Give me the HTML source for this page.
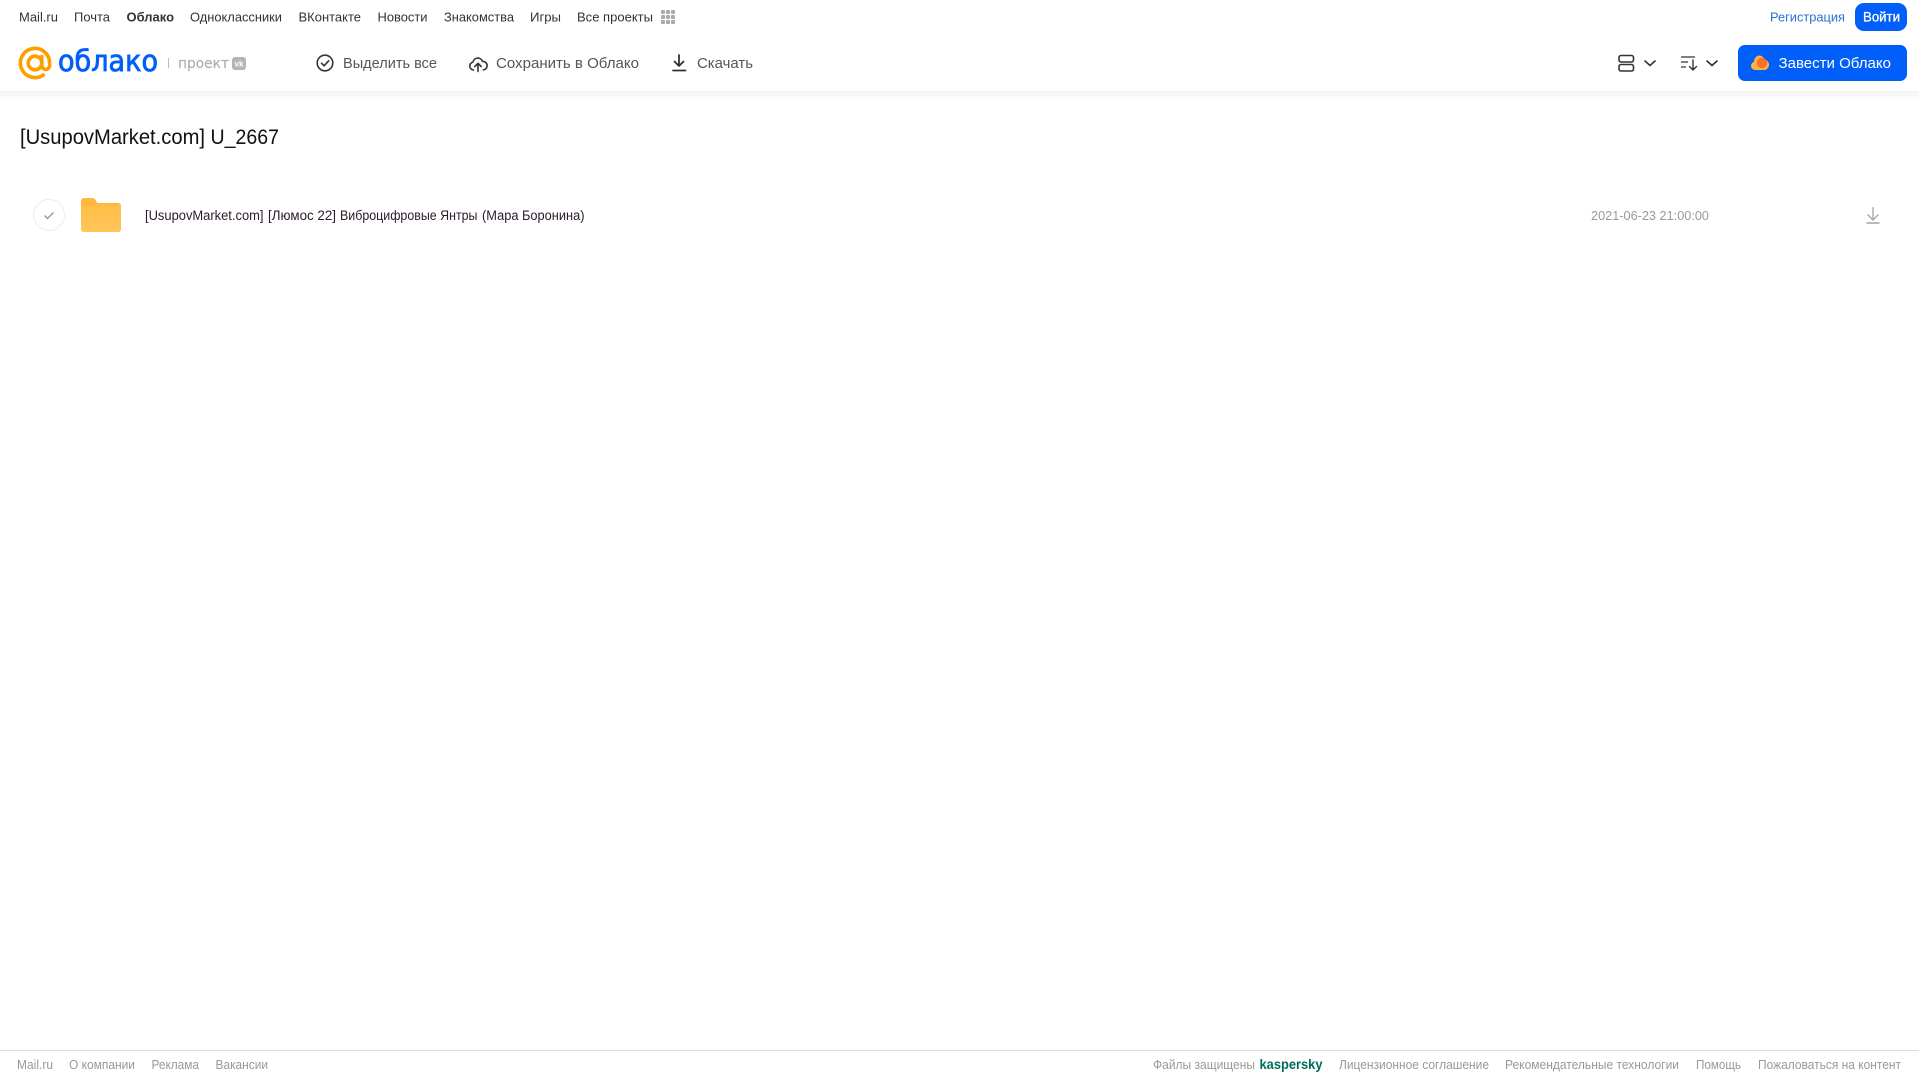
<!DOCTYPE html>
<html lang="ru">
<head>
<meta charset="utf-8">
<title>Облако</title>
<style>
html,body{margin:0;padding:0;background:#fff;width:1919px;height:1079px;overflow:hidden}
svg{display:block;position:absolute;left:0;top:0}
text{font-family:"Liberation Sans",sans-serif}
</style>
</head>
<body>
<svg width="1919" height="1079" viewBox="0 0 1919 1079" xmlns="http://www.w3.org/2000/svg">
<defs>
<linearGradient id="sh" x1="0" y1="0" x2="0" y2="1"><stop offset="0" stop-color="#f3f3f3"/><stop offset="1" stop-color="#ffffff"/></linearGradient>
<linearGradient id="fo" x1="0" y1="0" x2="0" y2="1"><stop offset="0" stop-color="#ffbe45"/><stop offset="1" stop-color="#ffc55c"/></linearGradient>
</defs>
<rect width="1919" height="1079" fill="#fff"/>
<rect x="0" y="91" width="1919" height="10" fill="url(#sh)"/>

<!-- top nav -->
<g font-size="13" fill="#333">
<text x="19" y="21.500" textLength="39" lengthAdjust="spacingAndGlyphs">Mail.ru</text>
<text x="74" y="21.500" textLength="36" lengthAdjust="spacingAndGlyphs">Почта</text>
<text x="126.500" y="21.500" textLength="47.500" lengthAdjust="spacingAndGlyphs" font-weight="700">Облако</text>
<text x="190" y="21.500" textLength="92" lengthAdjust="spacingAndGlyphs">Одноклассники</text>
<text x="298.500" y="21.500" textLength="62.500" lengthAdjust="spacingAndGlyphs">ВКонтакте</text>
<text x="377.500" y="21.500" textLength="50" lengthAdjust="spacingAndGlyphs">Новости</text>
<text x="444" y="21.500" textLength="70" lengthAdjust="spacingAndGlyphs">Знакомства</text>
<text x="530" y="21.500" textLength="31" lengthAdjust="spacingAndGlyphs">Игры</text>
<text x="577" y="21.500" textLength="76" lengthAdjust="spacingAndGlyphs">Все проекты</text>
</g>
<g fill="#aaa">
<rect x="661" y="10" width="4" height="4" rx="1"/><rect x="666" y="10" width="4" height="4" rx="1"/><rect x="671" y="10" width="4" height="4" rx="1"/>
<rect x="661" y="15" width="4" height="4" rx="1"/><rect x="666" y="15" width="4" height="4" rx="1"/><rect x="671" y="15" width="4" height="4" rx="1"/>
<rect x="661" y="20" width="4" height="4" rx="1"/><rect x="666" y="20" width="4" height="4" rx="1"/><rect x="671" y="20" width="4" height="4" rx="1"/>
</g>

<!-- logo -->
<g fill="none" stroke="#ff9e00" stroke-width="3.600" stroke-linecap="round">
<circle cx="35" cy="63" r="6.800"/>
<path d="M41.800 56.500v9a3.900 3.900 0 0 0 7.800 0V63a14.600 14.600 0 1 0-6.300 12"/>
</g>
<text x="58" y="71" font-size="29" textLength="100" lengthAdjust="spacingAndGlyphs" fill="#005ff9" stroke="#005ff9" stroke-width=".8" style="font-family:'DejaVu Sans',sans-serif">облако</text>
<rect x="168" y="58" width="1" height="10" fill="#bbb"/>
<text x="178" y="68" font-size="14" textLength="51" lengthAdjust="spacingAndGlyphs" fill="#b0b0b0" stroke="#b0b0b0" stroke-width=".2" style="font-family:'DejaVu Sans',sans-serif">проект</text>
<rect x="232" y="57" width="14" height="13" rx="3" fill="#b5b5b5"/>
<text x="239" y="66.500" font-size="8" font-weight="700" text-anchor="middle" fill="#fff">vk</text>

<!-- toolbar -->
<g fill="none" stroke="#333" stroke-width="1.600" stroke-linecap="round" stroke-linejoin="round">
<circle cx="325" cy="63" r="7.800"/>
<path d="M321.500 63.200l2.600 2.600 4.600-5"/>
<path d="M473.500 70a4 4 0 0 1-.6-7.900 5 5 0 0 1 9.600-.7 4.200 4.200 0 0 1 .8 8.500"/>
<path d="M478 71.500v-8m-3.200 3l3.200-3.200 3.200 3.200"/>
<path d="M679 55v11m-4.500-4.500l4.500 4.500 4.500-4.500" stroke-width="1.800"/>
<path d="M673 70.500h12.500" stroke-width="1.800"/>
</g>
<g font-size="14.500" fill="#555">
<text x="343" y="68" textLength="94" lengthAdjust="spacingAndGlyphs">Выделить все</text>
<text x="496" y="68" textLength="143" lengthAdjust="spacingAndGlyphs">Сохранить в Облако</text>
<text x="697" y="68" textLength="56" lengthAdjust="spacingAndGlyphs">Скачать</text>
</g>

<!-- right header -->
<text x="1770" y="21.500" font-size="13" textLength="75" lengthAdjust="spacingAndGlyphs" fill="#2b6fd6">Регистрация</text>
<rect x="1855" y="3" width="52" height="28" rx="9" fill="#005ff9"/>
<text x="1863" y="21.500" font-size="13.500" textLength="37" lengthAdjust="spacingAndGlyphs" fill="#fff" stroke="#fff" stroke-width=".3">Войти</text>
<g fill="none" stroke="#333" stroke-width="1.600" stroke-linecap="round" stroke-linejoin="round">
<rect x="1619" y="55.500" width="14.500" height="6.500" rx="2"/>
<rect x="1619" y="64.500" width="14.500" height="6.500" rx="2"/>
<path d="M1645 61l5 4.500 5-4.500"/>
<path d="M1707 61l5 4.500 5-4.500"/>
<path d="M1681.500 57h13M1681.500 62h6M1681.500 67h4" stroke-width="1.300"/>
<path d="M1693 60v9.500m-3.500-3l3.500 3.500 3.500-3.500" stroke-width="1.400"/>
</g>
<rect x="1738" y="45" width="169" height="36" rx="7" fill="#005ff9"/>
<path d="M1755 70a4.200 4.200 0 0 1-1-8.200 5.800 5.800 0 0 1 5-6.300 5.600 5.600 0 0 1 5.500 4.100 5.300 5.300 0 0 1 .5 10.400z" fill="#ffb13d"/>
<circle cx="1762" cy="63" r="5.200" fill="#f7722a"/>
<text x="1778.500" y="68" font-size="14.500" textLength="112.500" lengthAdjust="spacingAndGlyphs" fill="#fff">Завести Облако</text>

<!-- title -->
<g font-size="21.500" fill="#111">
<text x="20" y="144" textLength="185" lengthAdjust="spacingAndGlyphs">[UsupovMarket.com]</text>
<text x="210.500" y="144" textLength="68.500" lengthAdjust="spacingAndGlyphs">U_2667</text>
</g>

<!-- row -->
<circle cx="49" cy="215" r="15.500" fill="#fff" stroke="#ededed" stroke-width="1"/>
<path d="M44.500 215.500l3 3 6-6" fill="none" stroke="#999" stroke-width="1.400"/>
<path d="M81 201a3 3 0 0 1 3-3h8a4 4 0 0 1 3.500 2l1 2a3 3 0 0 0 2 1H118a3 3 0 0 1 3 3v23a3 3 0 0 1-3 3H84a3 3 0 0 1-3-3z" fill="#ffb83d"/>
<path d="M81 206.500a1 1 0 0 1 1-1h38a1 1 0 0 1 1 1V229a3 3 0 0 1-3 3H84a3 3 0 0 1-3-3z" fill="url(#fo)"/>
<g font-size="13.500" fill="#2b1a2b">
<text x="145" y="220" textLength="118.500" lengthAdjust="spacingAndGlyphs">[UsupovMarket.com]</text>
<text x="268" y="220" textLength="68" lengthAdjust="spacingAndGlyphs">[Люмос 22]</text>
<text x="340" y="220" textLength="137.500" lengthAdjust="spacingAndGlyphs">Виброцифровые Янтры</text>
<text x="482" y="220" textLength="102.500" lengthAdjust="spacingAndGlyphs">(Мара Боронина)</text>
</g>
<text x="1591" y="220" font-size="13" textLength="118" lengthAdjust="spacingAndGlyphs" fill="#999">2021-06-23 21:00:00</text>
<g fill="none" stroke="#aaa" stroke-width="1.400">
<path d="M1873 207v13m-5.500-5.500l5.500 5.500 5.500-5.500"/>
<path d="M1866.500 223h13" stroke-width="1.600"/>
</g>

<!-- footer -->
<rect x="0" y="1050" width="1919" height="1" fill="#dcdcdc"/>
<g font-size="13" fill="#999">
<text x="17" y="1069" textLength="36" lengthAdjust="spacingAndGlyphs">Mail.ru</text>
<text x="69" y="1069" textLength="66" lengthAdjust="spacingAndGlyphs">О компании</text>
<text x="151.500" y="1069" textLength="47.500" lengthAdjust="spacingAndGlyphs">Реклама</text>
<text x="215.500" y="1069" textLength="52.500" lengthAdjust="spacingAndGlyphs">Вакансии</text>
<text x="1153" y="1069" textLength="102" lengthAdjust="spacingAndGlyphs">Файлы защищены</text>
<text x="1339" y="1069" textLength="150" lengthAdjust="spacingAndGlyphs">Лицензионное соглашение</text>
<text x="1505" y="1069" textLength="174" lengthAdjust="spacingAndGlyphs">Рекомендательные технологии</text>
<text x="1696" y="1069" textLength="45" lengthAdjust="spacingAndGlyphs">Помощь</text>
<text x="1758" y="1069" textLength="143" lengthAdjust="spacingAndGlyphs">Пожаловаться на контент</text>
</g>
<text x="1259.500" y="1069" font-size="13.500" font-weight="700" textLength="63" lengthAdjust="spacingAndGlyphs" fill="#006d5c">kaspersky</text>
</svg>
</body>
</html>
